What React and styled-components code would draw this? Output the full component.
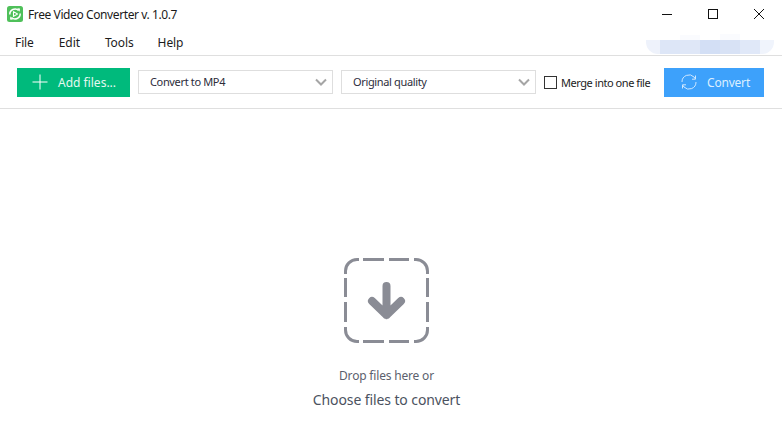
import React from "react";
import styled, { createGlobalStyle } from "styled-components";

const Global = createGlobalStyle`
  html, body { margin: 0; padding: 0; background: #fff; }
  body { font-family: "Noto Sans", "Open Sans", "Liberation Sans", sans-serif; overflow: hidden; }
`;
const Window = styled.div`
  width: 782px; height: 427px; display: flex; flex-direction: column; background: #fff; overflow: hidden; position: relative;
`;
const TitleBar = styled.div`
  height: 28px; display: flex; align-items: center; padding-left: 7px;
`;
const Title = styled.div`
  margin-left: 5px; font-size: 12px; letter-spacing: -0.4px; color: #1a1a1a; flex: 1;
`;
const WinButtons = styled.div`display: flex; align-items: center; height: 100%;`;
const WinButton = styled.div`
  width: 46px; height: 28px; display: flex; align-items: center; justify-content: center;
`;
const MenuBar = styled.div`
  height: 28px; display: flex; align-items: center; padding: 1px 0 0 15px; box-sizing: border-box; border-bottom: 1px solid #dfdfdf; position: relative;
`;
const MenuItem = styled.div`
  font-size: 12px; letter-spacing: -0.1px; color: #1c1c1c; margin-right: ${p => p.$gap}px;
`;
const Smudge = styled.div`
  position: absolute; left: 646px; top: 12px; width: 128px; height: 14px; display: flex;
  border-radius: 0 0 12px 12px; overflow: hidden;
`;
const SmudgeCell = styled.div`
  height: 100%; width: ${p => p.$w}px; background: ${p => p.$c};
`;
const SmudgeHalo = styled.div`
  position: absolute; left: ${p => p.$x}px; top: ${p => p.$y}px; width: 20px; height: ${p => p.$h}px; background: #fafbfe;
`;
const Toolbar = styled.div`
  height: 53px; box-sizing: border-box; display: flex; align-items: center; padding-left: 17px; border-bottom: 1px solid #dfdfdf;
`;
const ActionButton = styled.div`
  height: 29px; width: ${p => p.$w}px; background: ${p => p.$bg}; color: ${p => p.$fg};
  display: flex; align-items: center; font-size: 12px; box-sizing: border-box; padding-left: ${p => p.$pad}px;
  flex: none;
`;
const ButtonLabel = styled.span`margin-left: ${p => p.$gap}px; letter-spacing: ${p => p.$ls || 0}px;`;
const SelectBox = styled.div`
  width: 195px; height: 24px; box-sizing: border-box; border: 1px solid #dedede; margin-left: 8px;
  display: flex; align-items: center; justify-content: space-between; padding: 0 4px 1px 11px;
  font-size: 11px; letter-spacing: -0.35px; color: #2d2d3a; flex: none;
`;
const CheckRow = styled.div`
  display: flex; align-items: center; margin-left: 8px; font-size: 11px; letter-spacing: -0.45px; color: #1c1c1c; width: 120px; flex: none;
`;
const Check = styled.div`
  width: 13px; height: 13px; box-sizing: border-box; border: 1px solid #333; margin-right: 4px; flex: none;
`;
const DropArea = styled.div`
  flex: 1; display: flex; flex-direction: column; align-items: center; padding: 149px 9px 0 0;
`;
const DropHint = styled.div`
  margin-top: 25px; font-size: 12px; line-height: 16px; letter-spacing: -0.18px; color: #5c5f6e;
`;
const ChooseLink = styled.div`
  margin-top: 6px; font-size: 14px; line-height: 20px; color: #4b5260; letter-spacing: -0.1px;
`;

const Chevron = () => (
  <svg width="14" height="10" viewBox="0 0 14 10"><path d="M2 2.5 7 7.5 12 2.5" fill="none" stroke="#a5a5a5" strokeWidth="2" /></svg>
);

const smudgeCells = [
  [14, "#eef2fb"], [20, "#dde6f7"], [20, "#dfe7f7"], [20, "#d3dff5"], [20, "#d8e2f5"], [20, "#e0e8f8"], [14, "#f0f4fc"],
];

export default function App() {
  return (
    <Window>
      <Global />
      <TitleBar>
        <svg width="16" height="16" viewBox="0 0 16 16">
          <rect width="16" height="16" rx="2.5" fill="#4fc05a" />
          <path d="M2.8 8.5a5.2 5.2 0 0 1 8.8-4M13.2 7.5a5.2 5.2 0 0 1-8.8 4" fill="none" stroke="#fff" strokeWidth="1.5" />
          <path d="M10.2 2.2 13 2.4 12.6 5.8ZM5.8 13.8 3 13.6 3.4 10.2Z" fill="#fff" />
          <path d="M6.5 5.6 10.5 8 6.5 10.4Z" fill="none" stroke="#fff" strokeWidth="1.1" strokeLinejoin="round" />
        </svg>
        <Title>Free Video Converter v. 1.0.7</Title>
        <WinButtons>
          <WinButton>
            <svg width="12" height="12" viewBox="0 0 12 12"><path d="M1 6.5H11" stroke="#111" strokeWidth="1" /></svg>
          </WinButton>
          <WinButton>
            <svg width="12" height="12" viewBox="0 0 12 12"><rect x="1.5" y="1.5" width="9" height="9" fill="none" stroke="#111" /></svg>
          </WinButton>
          <WinButton>
            <svg width="12" height="12" viewBox="0 0 12 12"><path d="M1 1 11 11M11 1 1 11" stroke="#111" strokeWidth="1" /></svg>
          </WinButton>
        </WinButtons>
      </TitleBar>
      <MenuBar>
        <MenuItem $gap={25}>File</MenuItem>
        <MenuItem $gap={25}>Edit</MenuItem>
        <MenuItem $gap={24}>Tools</MenuItem>
        <MenuItem $gap={0}>Help</MenuItem>
        <SmudgeHalo $x={680} $y={7} $h={5} />
        <SmudgeHalo $x={720} $y={6} $h={6} />
        <Smudge>
          {smudgeCells.map(([w, c], i) => <SmudgeCell key={i} $w={w} $c={c} />)}
        </Smudge>
      </MenuBar>
      <Toolbar>
        <ActionButton $w={113} $bg="#00ba7c" $fg="#e4f8f0" $pad={15}>
          <svg width="16" height="16" viewBox="0 0 16 16"><path d="M8 0.5V15.5M0.5 8H15.5" stroke="#fff" strokeWidth="1" /></svg>
          <ButtonLabel $gap={10}>Add files...</ButtonLabel>
        </ActionButton>
        <SelectBox>Convert to MP4<Chevron /></SelectBox>
        <SelectBox>Original quality<Chevron /></SelectBox>
        <CheckRow><Check />Merge into one file</CheckRow>
        <ActionButton $w={100} $bg="#3da1fb" $fg="#dcefff" $pad={17}>
          <svg width="16" height="16" viewBox="0 0 16 16" fill="none" stroke="#cfe7fe" strokeWidth="1">
            <path d="M1 8a7 7 0 0 1 12-5l1.5 2M15 8a7 7 0 0 1-12 5l-1.5-2" />
            <path d="M14.5 1.5V5.2H11M1.5 14.5V10.8H5" />
          </svg>
          <ButtonLabel $gap={10} $ls={-0.2}>Convert</ButtonLabel>
        </ActionButton>
      </Toolbar>
      <DropArea>
        <svg width="85" height="85" viewBox="0 0 85 85" fill="none" stroke="#8a8c95" strokeWidth="3">
          <path d="M1.5 16V13A11.5 11.5 0 0 1 13 1.5H15M19 1.5H40M45 1.5H65M70 1.5H72A11.5 11.5 0 0 1 83.5 13V16M83.5 20V39M83.5 44V64M83.5 69V72A11.5 11.5 0 0 1 72 83.5H70M65 83.5H45M40 83.5H19M15 83.5H13A11.5 11.5 0 0 1 1.5 72V69M1.5 64V44M1.5 39V20" />
          <path d="M42.5 28V57M28 43 42.5 57 57 43" strokeWidth="8" strokeLinecap="round" strokeLinejoin="round" />
        </svg>
        <DropHint>Drop files here or</DropHint>
        <ChooseLink>Choose files to convert</ChooseLink>
      </DropArea>
    </Window>
  );
}
